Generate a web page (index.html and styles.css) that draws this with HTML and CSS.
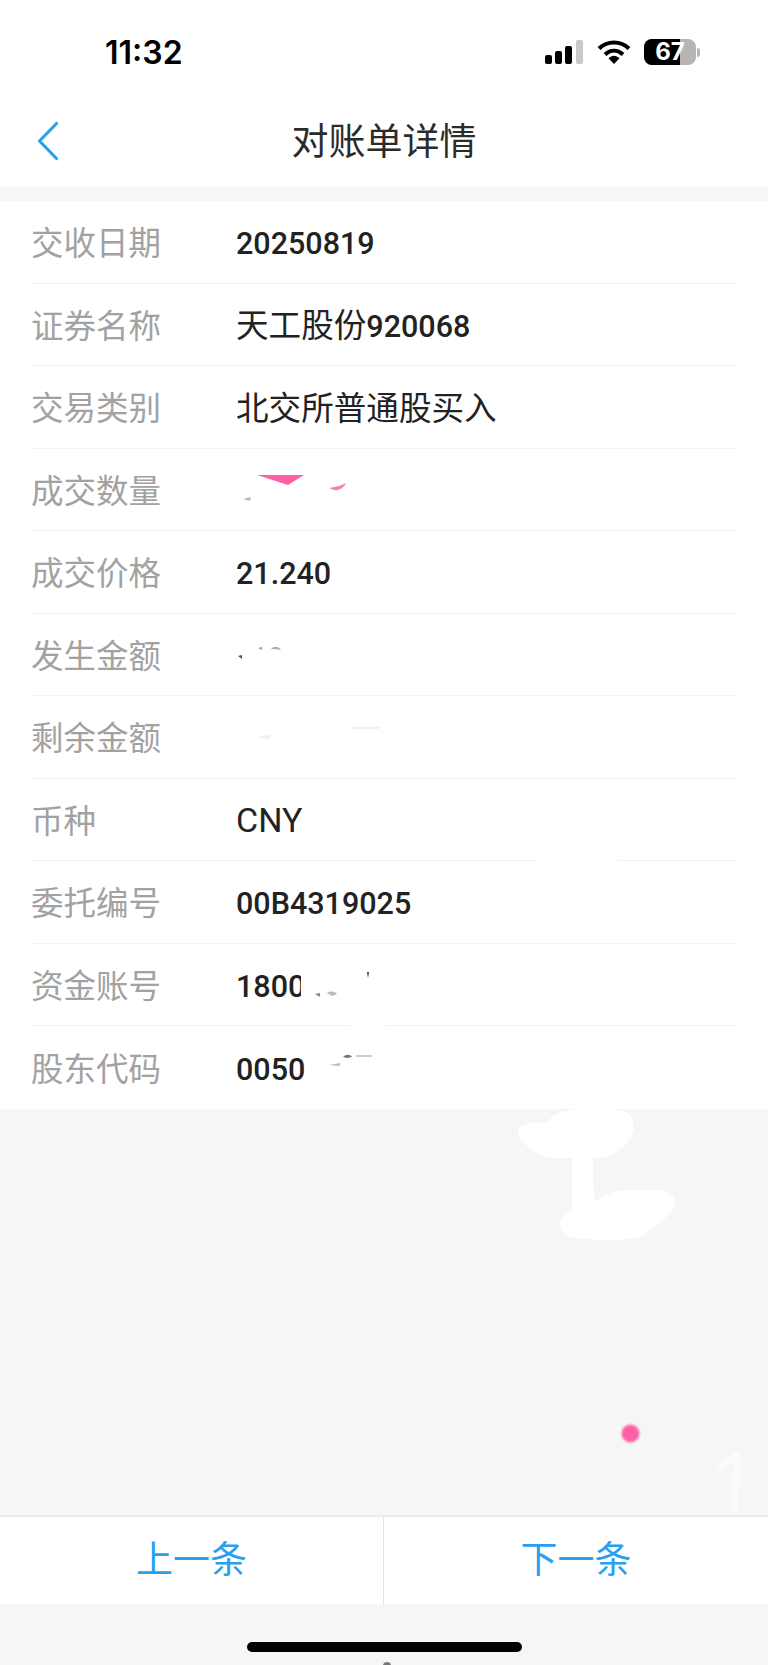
FILE: index.html
```html
<!DOCTYPE html>
<html>
<head>
    <meta charset="utf-8">
    <link rel="stylesheet" href="styles.css">
</head>
<body>
    <div id="page">
        <!-- Status Bar -->
        <div id="status-bar">
            <span id="clock">11:32</span>
            <div id="status-icons">
                <svg class="signal" width="38" height="24" viewBox="0 0 38 24">
                    <rect x="0" y="15" width="7" height="9" rx="2" fill="#000"/>
                    <rect x="10" y="11" width="7" height="13" rx="2" fill="#000"/>
                    <rect x="20" y="6" width="7" height="18" rx="2" fill="#000"/>
                    <rect x="31" y="0" width="7" height="24" rx="2" fill="#c9c9c9"/>
                </svg>
                <svg class="wifi" width="34" height="24" viewBox="0 0 34 24">
                    <path d="M2 8.500C10.500 0.500 23.500 0.500 32 8.500" fill="none" stroke="#000" stroke-width="4.200"/>
                    <path d="M8 14.500C13.500 9.500 20.500 9.500 26 14.500" fill="none" stroke="#000" stroke-width="4.200"/>
                    <path d="M11.500 18.200C15 14.800 19 14.800 22.500 18.200L17 24Z" fill="#000"/>
                </svg>
                <div class="battery">
                    <div class="battery-body">
                        <div class="battery-fill"></div>
                        <span class="battery-level">67</span>
                    </div>
                    <div class="battery-nub"></div>
                </div>
            </div>
        </div>

        <!-- Header -->
        <div id="nav-bar">
            <svg class="back" width="24" height="42" viewBox="0 0 24 42">
                <path d="M21.500 3.500L4.500 21L21.500 38.500" fill="none" stroke="#2a9fee" stroke-width="3.200" stroke-linecap="round" stroke-linejoin="round"/>
            </svg>
            <span id="nav-title">对账单详情</span>
        </div>

        <!-- Detail Rows -->
        <div id="detail-list">
            <div class="row"><span class="label">交收日期</span><span class="value num">20250819</span></div>
            <div class="row"><span class="label">证券名称</span><span class="value">天工股份<span class="num">920068</span></span></div>
            <div class="row"><span class="label">交易类别</span><span class="value">北交所普通股买入</span></div>
            <div class="row"><span class="label">成交数量</span></div>
            <div class="row"><span class="label">成交价格</span><span class="value num">21.240</span></div>
            <div class="row"><span class="label">发生金额</span></div>
            <div class="row"><span class="label">剩余金额</span></div>
            <div class="row"><span class="label">币种</span><span class="value latin">CNY</span></div>
            <div class="row"><span class="label">委托编号</span><span class="value num">00B4319025</span></div>
            <div class="row"><span class="label">资金账号</span><span class="value num">1800</span></div>
            <div class="row"><span class="label">股东代码</span><span class="value num">0050</span></div>
        </div>

        <div id="spacer"></div>

        <!-- Footer Buttons -->
        <div id="pager">
            <button class="pager-button">上一条</button>
            <button class="pager-button">下一条</button>
        </div>

        <div id="home-area">
            <div id="home-indicator"></div>
        </div>

        <!-- Paint marks drawn over the screenshot -->
        <svg id="marks" width="768" height="1665" viewBox="0 0 768 1665">
            <path d="M257 475L304 475L288 485Z" fill="#ff5fa6"/>
            <path d="M329 488C337 487 342 485 346 483C344 487 340 491 334 490Z" fill="#ff7ab5"/>
            <path d="M243 499L251 497L250 501Z" fill="#bbb"/>
            <path d="M238 656L242 655L242 659Z" fill="#555"/>
            <path d="M258 648L262 647L262 650Z" fill="#999"/>
            <path d="M271 649C274 646 278 646 281 650L275 649Z" fill="#aaa"/>
            <path d="M257 737L272 735L268 739Z" fill="#eee"/>
            <path d="M350 727L380 727L378 729L352 729Z" fill="#f0f0f0"/>
            <path d="M537 856H618V866H537Z" fill="#fff"/>
            <path d="M351 1018H385V1032H351Z" fill="#fff"/>
            <path d="M301 960H372V1002H301Z" fill="#fff"/>
            <path d="M315 994L320 993L320 997Z" fill="#888"/>
            <path d="M327 993C330 991 334 991 337 994L332 996Z" fill="#bbb"/>
            <path d="M367 972L369 972L368 978Z" fill="#333"/>
            <path d="M329 1065L340 1063L340 1066Z" fill="#bbb"/>
            <path d="M343 1057C346 1054 350 1054 352 1057L347 1058Z" fill="#777"/>
            <path d="M356 1055L372 1055L372 1057L356 1057Z" fill="#ccc"/>
            <path d="M518 1134C517 1124 528 1122 548 1123C552 1112 570 1108 600 1108C622 1108 634 1112 634 1128C634 1140 620 1152 604 1158H593L594 1202C604 1195 614 1190 628 1190L660 1190C672 1191 676 1198 674 1207C668 1218 655 1226 643 1235C636 1240 620 1240 600 1240L575 1238C563 1236 559 1230 560 1222C562 1216 566 1213 572 1210L572 1158H552C540 1158 524 1146 518 1134Z" fill="#fff"/>
            <circle class="paint-dot" cx="630.500" cy="1433.500" r="9" fill="#ff5fa6"/>
            <path d="M719 1467L737 1455L735 1508" fill="none" stroke="#fbfbfb" stroke-width="7" stroke-linecap="round" stroke-linejoin="round"/>
            <circle cx="387" cy="1666" r="4" fill="#777"/>
        </svg>
    </div>
</body>
</html>
```

FILE: styles.css
```css
/* Global Styles */
body {
    margin: 0;
    font-family: "Noto Sans CJK SC", sans-serif;
}

#page {
    position: relative;
    display: flex;
    flex-direction: column;
    width: 768px;
    height: 1665px;
    overflow: hidden;
    background-color: #f6f6f6;
}

/* Status Bar */
#status-bar {
    display: flex;
    justify-content: space-between;
    align-items: center;
    height: 104px;
    padding: 0 68px 0 105px;
    box-sizing: border-box;
    background-color: #ffffff;
}

#clock {
    font-family: Inter, sans-serif;
    font-size: 32px;
    font-weight: 600;
    color: #000000;
}

#status-icons {
    display: flex;
    align-items: center;
    gap: 14px;
}

.battery {
    display: flex;
    align-items: center;
    gap: 1px;
    margin-left: -1px;
}

.battery-body {
    position: relative;
    display: flex;
    justify-content: center;
    align-items: center;
    width: 52px;
    height: 26px;
    border-radius: 8px;
    background-color: #b5b5b5;
}

.battery-fill {
    position: absolute;
    top: 0;
    bottom: 0;
    left: 0;
    width: 36px;
    border-radius: 8px 0 0 8px;
    background-color: #000000;
}

.battery-level {
    position: relative;
    font-family: Inter, sans-serif;
    font-size: 24px;
    line-height: 26px;
    font-weight: 700;
    color: #ffffff;
}

.battery-nub {
    width: 3px;
    height: 9px;
    border-radius: 0 3px 3px 0;
    background-color: #b5b5b5;
}

/* Header */
#nav-bar {
    position: relative;
    display: flex;
    justify-content: center;
    align-items: center;
    height: 83px;
    padding-bottom: 13px;
    box-sizing: border-box;
    margin-bottom: 14px;
    background-color: #ffffff;
}

.back {
    position: absolute;
    left: 35px;
    top: 16px;
}

#nav-title {
    font-size: 37px;
    color: #2b2b2b;
}

/* Detail Rows */
#detail-list {
    display: flex;
    flex-direction: column;
    padding: 0 31px;
    background-color: #ffffff;
}

.row {
    display: flex;
    align-items: center;
    height: 82.500px;
    box-sizing: border-box;
    border-bottom: 1px solid #f1f1f1;
}

.row:last-child {
    border-bottom: none;
}

.label {
    width: 205px;
    margin-bottom: 2px;
    font-size: 32.500px;
    color: #a2a2a2;
}

.value {
    margin-bottom: 3px;
    font-size: 32.600px;
    color: #222222;
}

.num {
    font-family: Roboto, sans-serif;
    font-size: 30.500px;
    font-weight: 500;
}

.row > .num {
    margin-top: 4px;
    margin-bottom: 0;
}

.row > .latin {
    margin-top: 2px;
    margin-bottom: 0;
    font-family: Roboto, sans-serif;
    font-size: 34px;
}

#spacer {
    flex: 1;
}

/* Footer Buttons */
#pager {
    display: flex;
    height: 89px;
    box-sizing: border-box;
    border-top: 2px solid #ebebeb;
    background-color: #ffffff;
}

.pager-button {
    flex: 1;
    padding: 0 0 7px;
    border: none;
    background-color: #ffffff;
    font-family: "Noto Sans CJK SC", sans-serif;
    font-size: 37px;
    color: #2a9fee;
}

.pager-button:first-child {
    flex: 0 0 384px;
    border-right: 1px solid #e4e4e4;
}

#home-area {
    display: flex;
    justify-content: center;
    height: 61px;
}

#home-indicator {
    width: 275px;
    height: 10px;
    margin-top: 38px;
    border-radius: 5px;
    background-color: #000000;
}

/* Paint Marks */
#marks {
    position: absolute;
    top: 0;
    left: 0;
}

.paint-dot {
    filter: blur(1px);
}
```
